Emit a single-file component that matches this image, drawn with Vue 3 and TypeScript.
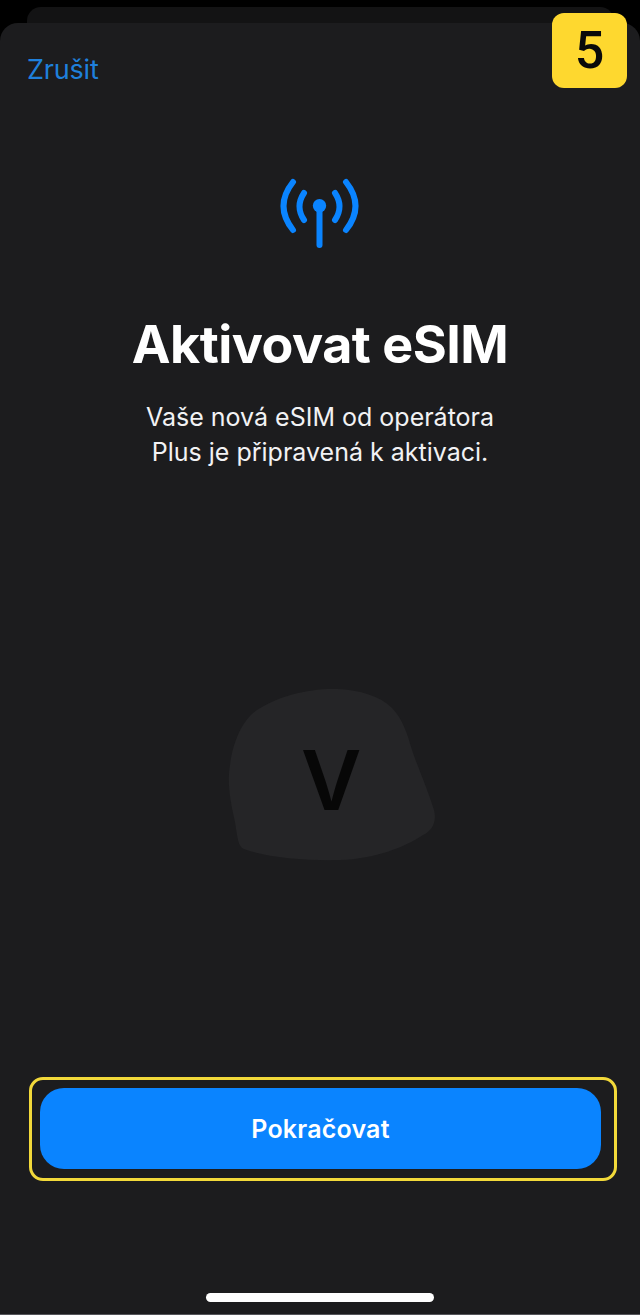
<template>
  <div class="screen">
    <div class="back-card"></div>
    <div class="step-badge">5</div>
    <div class="sheet">
      <div class="sheet-header">
        <a class="cancel">Zrušit</a>
      </div>

      <svg class="antenna" viewBox="0 0 120 95" fill="none">
        <path d="M33 17Q14 41 33 65M86 17Q105 41 86 65" stroke="#0a84ff" stroke-width="6" stroke-linecap="round" />
        <path d="M44 28Q35 41.500 44 55M75 28Q84 41.500 75 55" stroke="#0a84ff" stroke-width="6" stroke-linecap="round" />
        <path d="M59.500 41V80" stroke="#0a84ff" stroke-width="6" stroke-linecap="round" />
        <circle cx="59.500" cy="40.700" r="6.700" fill="#0a84ff" />
      </svg>

      <h1 class="title">{{ title }}</h1>
      <p class="description">
        <span v-for="line in description" :key="line">{{ line }}</span>
      </p>

      <div class="blob-wrap">
        <svg class="blob" viewBox="0 0 240 200">
          <path
            d="M127 19C150 20 170 26 182 38C193 49 198 66 202 80C207 95 218 120 224 140C227 152 222 161 213 165C195 177 165 189 130 190C95 191 55 187 34 179C28 176 28 170 25 152C20 130 17 112 20 95C23 72 32 50 47 40C68 26 100 18 127 19Z"
            fill="#252527"
          />
        </svg>
        <span class="blob-letter">V</span>
      </div>

      <div class="action-outline">
        <button class="primary-btn">Pokračovat</button>
      </div>

      <div class="home-indicator"></div>
    </div>
  </div>
</template>

<script setup lang="ts">
const title = 'Aktivovat eSIM';
const description: string[] = ['Vaše nová eSIM od operátora', 'Plus je připravená k aktivaci.'];
</script>

<style>
body {
  background: #000;
}
</style>

<style scoped>
.screen {
  position: relative;
  width: 640px;
  height: 1315px;
  padding-top: 7px;
  box-sizing: border-box;
  display: flex;
  flex-direction: column;
  background: #000;
  font-family: Inter, "Liberation Sans", sans-serif;
  overflow: hidden;
}

.back-card {
  height: 16px;
  margin: 0 26px 0 27px;
  flex-shrink: 0;
  background: #131314;
  border-radius: 14px 14px 0 0;
}

.step-badge {
  position: absolute;
  top: 13px;
  left: 552px;
  width: 75px;
  height: 75px;
  border-radius: 12px;
  background: #fed82f;
  color: #0a0a0a;
  font-family: Roboto, sans-serif;
  font-size: 52px;
  font-weight: 500;
  line-height: 75px;
  text-align: center;
}

.sheet {
  flex: 1;
  display: flex;
  flex-direction: column;
  align-items: center;
  background: #1c1c1e;
  border-radius: 18px 18px 0 0;
  border-bottom: 1px solid #55555a;
}

.sheet-header {
  align-self: stretch;
  height: 94px;
  padding: 31px 0 0 27px;
  box-sizing: border-box;
}

.cancel {
  color: #1f80dc;
  font-size: 27px;
  line-height: 32px;
  letter-spacing: -0.2px;
}

.antenna {
  display: block;
  width: 120px;
  height: 95px;
  margin-top: 48px;
}

.title {
  margin: 55px 0 0;
  color: #fff;
  font-size: 52px;
  font-weight: 700;
  line-height: 60px;
  letter-spacing: -0.5px;
}

.description {
  display: flex;
  flex-direction: column;
  align-items: center;
  margin: 25px 0 0;
  color: #f2f2f4;
  font-size: 25px;
  line-height: 35px;
}

.blob-wrap {
  position: relative;
  width: 240px;
  height: 200px;
  margin: 200px 0 0 20px;
}

.blob {
  display: block;
  width: 240px;
  height: 200px;
}

.blob-letter {
  position: absolute;
  top: 61px;
  left: 91px;
  color: #070707;
  font-size: 83px;
  font-weight: 600;
  line-height: 98px;
}

.action-outline {
  width: 588px;
  height: 104px;
  margin: 207px 0 0 6px;
  padding: 8px 13px 9px 8px;
  box-sizing: border-box;
  border: 3px solid #f2d93a;
  border-radius: 14px;
}

.primary-btn {
  display: block;
  width: 100%;
  height: 100%;
  border: 0;
  border-radius: 24px;
  background: #0a84ff;
  color: #fff;
  font-family: inherit;
  font-size: 25px;
  font-weight: 600;
  letter-spacing: 0.2px;
}

.home-indicator {
  width: 228px;
  height: 9px;
  margin-top: 112px;
  border-radius: 5px;
  background: #fff;
}
</style>
